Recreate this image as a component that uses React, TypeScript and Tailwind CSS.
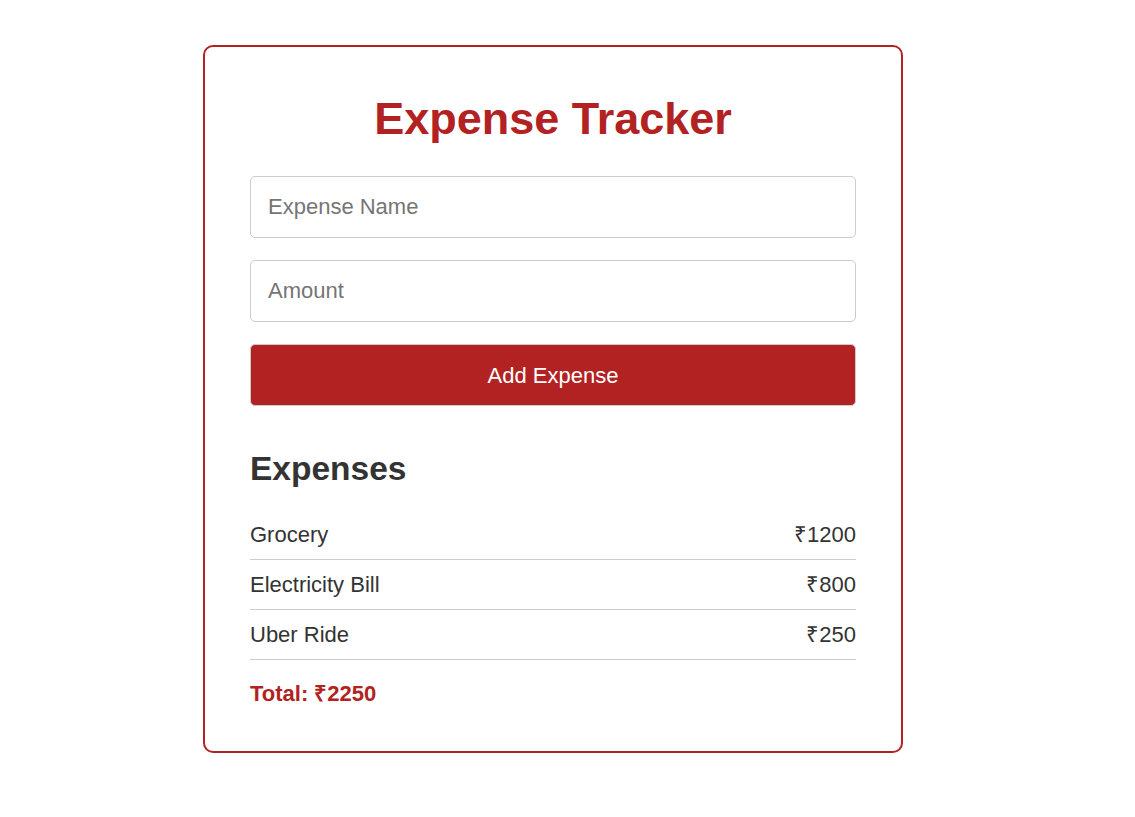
import React, { useState } from 'react';

interface Expense {
  name: string;
  amount: number;
}

const initialExpenses: Expense[] = [
  { name: 'Grocery', amount: 1200 },
  { name: 'Electricity Bill', amount: 800 },
  { name: 'Uber Ride', amount: 250 },
];

export default function App() {
  const [expenses, setExpenses] = useState<Expense[]>(initialExpenses);
  const [name, setName] = useState('');
  const [amount, setAmount] = useState('');

  const total = expenses.reduce((sum, e) => sum + e.amount, 0);

  const addExpense = () => {
    const value = Number(amount);
    if (!name.trim() || !value) return;
    setExpenses([...expenses, { name: name.trim(), amount: value }]);
    setName('');
    setAmount('');
  };

  return (
    <div
      className="min-h-screen bg-white pt-[45px] pb-[40px]"
      style={{ fontFamily: '"Liberation Sans", Arial, sans-serif' }}
    >
      <div className="ml-[203px] w-[700px] rounded-[10px] border-2 border-[#b22222] px-[45px] pt-[46px] pb-[45px]">
        <h1 className="text-center text-[45px] font-bold leading-[51px] text-[#b22222]">
          Expense Tracker
        </h1>

        <div className="mt-[32px] flex flex-col gap-[22px]">
          <input
            type="text"
            value={name}
            onChange={(e) => setName(e.target.value)}
            placeholder="Expense Name"
            className="h-[62px] w-full rounded-[5px] border border-[#ccc] px-[17px] text-[22px] text-[#333] placeholder:text-[#757575] outline-none"
          />
          <input
            type="number"
            value={amount}
            onChange={(e) => setAmount(e.target.value)}
            placeholder="Amount"
            className="h-[62px] w-full rounded-[5px] border border-[#ccc] px-[17px] text-[22px] text-[#333] placeholder:text-[#757575] outline-none"
          />
          <button
            onClick={addExpense}
            className="h-[62px] w-full rounded-[5px] border border-[#ccc] bg-[#b22222] text-[22px] text-white"
          >
            Add Expense
          </button>
        </div>

        <h2 className="mt-[44px] text-[33.5px] font-bold leading-[38px] text-[#333]">Expenses</h2>

        <ul className="mt-[22px]">
          {expenses.map((e, i) => (
            <li
              key={i}
              className="flex justify-between border-b border-[#ccc] py-[11px] text-[22px] leading-[27px] text-[#333]"
            >
              <span>{e.name}</span>
              <span>₹{e.amount}</span>
            </li>
          ))}
        </ul>

        <p className="mt-[21px] text-[22px] font-bold leading-[25px] text-[#b22222]">Total: ₹{total}</p>
      </div>
    </div>
  );
}
